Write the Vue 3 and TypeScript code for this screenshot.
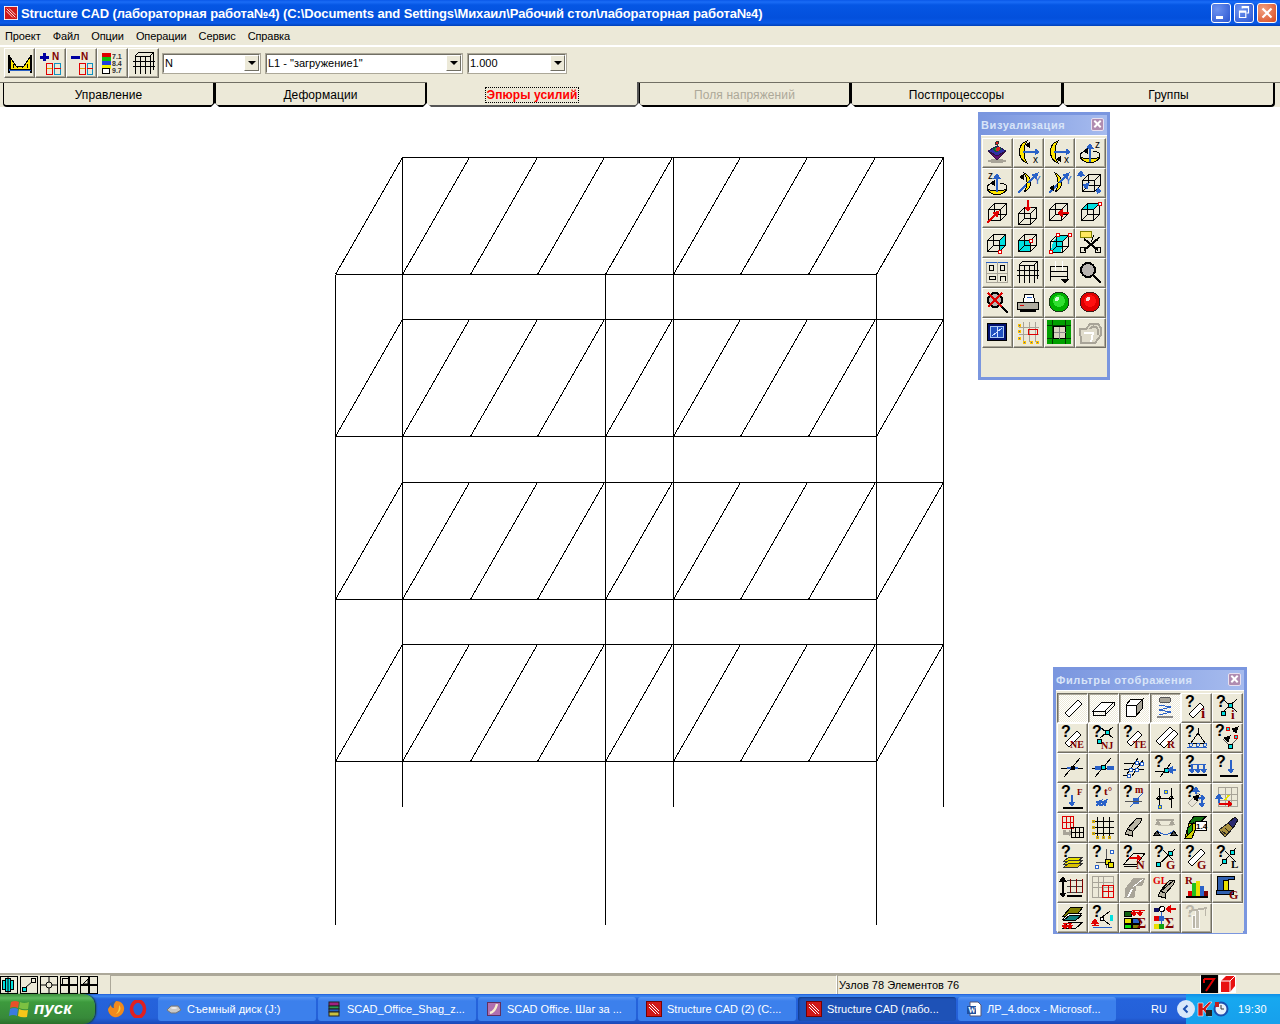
<script setup lang="ts">
const L = (a: number, b: number, c: number, d: number, s = '#000', w = 1) =>
  `<line x1="${a}" y1="${b}" x2="${c}" y2="${d}" stroke="${s}" stroke-width="${w}"/>`
const R = (x: number, y: number, w: number, h: number, f = 'none', s = '#000') =>
  `<rect x="${x}" y="${y}" width="${w}" height="${h}" fill="${f}" stroke="${s}"/>`
const D = (d: string, f = 'none', s = '#000', w = 1) =>
  `<path d="${d}" fill="${f}" stroke="${s}" stroke-width="${w}"/>`
const C = (x: number, y: number, r: number, f = 'none', s = '#000') =>
  `<circle cx="${x}" cy="${y}" r="${r}" fill="${f}" stroke="${s}"/>`
const T = (x: number, y: number, str: string, c = '#000', size = 9, fam = 'Liberation Serif', weight = 'bold') =>
  `<text x="${x}" y="${y}" fill="${c}" font-size="${size}" font-weight="${weight}" font-family="${fam}, serif">${str}</text>`
const axis = (x: number, y: number, str: string, c = '#000') => T(x, y, str, c, 10, 'Liberation Sans', 'normal')

const Q = (x = 1, y = 11) => T(x, y + 1, '?', '#000', 16, 'Liberation Sans')
const RED = '#e00000'
const DKRED = '#800000'
const BLUE = '#2a62c8'
const CY = '#00e0e0'

const arrR = (x: number, y: number, n: number, c = BLUE) =>
  L(x, y, x + n, y, c, 2) + D(`M${x + n} ${y - 3}L${x + n + 4} ${y}L${x + n} ${y + 3}Z`, c, c)
const arrL = (x: number, y: number, n: number, c = BLUE) =>
  L(x, y, x - n, y, c, 2) + D(`M${x - n} ${y - 3}L${x - n - 4} ${y}L${x - n} ${y + 3}Z`, c, c)
const arrD = (x: number, y: number, n: number, c = BLUE) =>
  L(x, y, x, y + n, c, 2) + D(`M${x - 3} ${y + n}L${x} ${y + n + 4}L${x + 3} ${y + n}Z`, c, c)
const arrU = (x: number, y: number, n: number, c = BLUE) =>
  L(x, y, x, y - n, c, 2) + D(`M${x - 3} ${y - n}L${x} ${y - n - 4}L${x + 3} ${y - n}Z`, c, c)
const arrNE = (x: number, y: number, n: number, c = BLUE) =>
  L(x, y, x + n, y - n, c, 2) + D(`M${x + n - 3} ${y - n - 1}L${x + n + 3} ${y - n - 3}L${x + n + 1} ${y - n + 3}Z`, c, c)
const tip = (x: number, y: number) => D(`M${x} ${y - 2}L${x - 3} ${y}L${x} ${y + 2}Z`, '#000')

const crescentV = (x = 0) =>
  D(`M${x + 9} 1C${x - 1} 4 ${x - 1} 19 ${x + 9} 23C${x + 5} 17 ${x + 5} 7 ${x + 9} 1Z`, '#ffe600')
const ringH = (y = 0) =>
  D(`M2 ${y + 9}C2 ${y + 19} 22 ${y + 19} 22 ${y + 9}C22 ${y + 14} 2 ${y + 14} 2 ${y + 9}Z`, '#ffe600') +
  D(`M2 ${y + 9}C3 ${y + 6} 8 ${y + 5} 9 ${y + 5}M22 ${y + 9}C21 ${y + 6} 17 ${y + 5} 15 ${y + 5}`)
const crescentY = () => D('M8 3C17 7 17 17 8 22C12 16 12 9 8 3Z', '#ffe600')

const cube = (x = 3, y = 7, face = '') =>
  (face ? face : '') +
  R(x + 0.5, y + 5.5, 12, 11) +
  R(x + 6.5, y - 0.5, 12, 11) +
  L(x + 0.5, y + 5.5, x + 6.5, y - 0.5) +
  L(x + 12.5, y + 5.5, x + 18.5, y - 0.5) +
  L(x + 0.5, y + 16.5, x + 6.5, y + 10.5) +
  L(x + 12.5, y + 16.5, x + 18.5, y + 10.5)
const rod = (x = 7, y = 21, n = 14, f = '#fff', s = '#000') =>
  D(`M${x} ${y - 4}L${x + n} ${y - 4 - n}L${x + n + 4} ${y - n}L${x + 4} ${y}Z`, f, s)
const frame = (c = '#000') =>
  L(3.5, 5, 3.5, 23, c) + L(8.5, 5, 8.5, 23, c) + L(13.5, 5, 13.5, 23, c) + L(18.5, 5, 18.5, 23, c) + L(21.5, 2, 21.5, 19, c) +
  L(3, 5.5, 19, 5.5, c) + L(7, 1.5, 22, 1.5, c) + L(3, 5, 7, 1, c) + L(18, 5, 22, 1, c) + L(1, 10.5, 23, 10.5, c) + L(1, 15.5, 23, 15.5, c)
const iBeam = (x = 5, y = 4) =>
  D(`M${x} ${y + 11}L${x + 10} ${y}L${x + 15} ${y + 1}L${x + 13} ${y + 5}L${x + 5} ${y + 14}L${x + 5} ${y + 18}L${x - 2} ${y + 16}L${x} ${y + 12}Z`, '#b8b4a4') +
  L(x, y + 11, x + 5, y + 13)

const vizIcons: string[] = [
  // row 1
  L(12, 1, 12, 7, '#333') + C(12, 3, 1.5, '#e02020', '#333') +
  `<ellipse cx="12" cy="21" rx="9" ry="2" fill="#a8a498"/>` +
  D('M3 11L12 6L21 11L12 20Z', '#3030a8', '#202060') + D('M3 11L12 16L21 11L12 20Z', '#601070', '#301040') +
  D('M8 9L12 7L16 9L12 12Z', '#10a040', '#106030') + C(13, 9, 1.5, '#e02020', '#e02020'),
  crescentV(2) + arrR(7, 12, 12) + tip(13, 5) + axis(17, 23, 'x'),
  crescentV(2) + arrR(7, 12, 12) + tip(13, 19) + axis(17, 23, 'x'),
  ringH(6) + arrU(12, 22, 14) + axis(17, 8, 'z') + tip(9, 11),
  // row 2
  ringH(8) + arrU(12, 22, 14) + axis(3, 9, 'z') + tip(9, 13),
  L(2, 23, 10, 15, BLUE, 2) + crescentY() + arrNE(12, 13, 7) + axis(18, 14, 'Y', BLUE) + tip(7, 7),
  L(2, 23, 10, 15, BLUE, 2) + crescentY() + arrNE(12, 13, 7) + axis(18, 14, 'Y', BLUE) + tip(6, 18),
  cube(4, 5) + arrU(3, 7, 2) + arrNE(6, 18, 2) + arrR(18, 21, 1),
  // row 3
  cube(3, 4) + arrNE(2, 23, 9, RED),
  cube(2, 8) + arrD(12, 0, 7, RED),
  cube(2, 4) + arrL(22, 13, 7, RED),
  cube(3, 4, D('M3.5 9.5L9.5 3.5L21.5 3.5L15.5 9.5Z', CY, 'none')) + R(20, 2, 3, 3, '#fff', RED),
  // row 4
  cube(2, 5, D('M14.5 10.5L20.5 4.5L20.5 15.5L14.5 21.5Z', CY, 'none')) + R(13, 20, 3, 3, '#fff', RED),
  cube(2, 5, R(2.5, 10.5, 12, 11, CY, '#000')) + R(13, 9, 3, 3, '#fff', RED),
  cube(3, 6, D('M6 12L12 5L22 5L16 12Z M6 12L3.5 22L14 22L16 12Z', CY, 'none')) + R(9, 3, 3, 3, '#fff', RED) + R(21, 3, 3, 3, '#fff', RED) + R(2, 20, 3, 3, '#fff', RED),
  R(2.5, 1.5, 11, 6, '#ffe860', '#808000') + L(6, 9, 20, 20, '#000', 2) + L(20, 9, 6, 20, '#000', 2) + C(5, 20, 3) + C(20, 20, 3) + L(16, 5, 13, 12) + L(22, 7, 16, 11),
  // row 5
  R(1.5, 2.5, 21, 20, 'none', '#a8a498') + L(1, 2.5, 23, 2.5, BLUE) + L(12, 2, 12, 22, '#a8a498') + L(1, 13, 23, 13, '#a8a498') + R(4.5, 5.5, 4, 5) + R(15.5, 5.5, 4, 5) + R(4.5, 16.5, 6, 3) + D('M15.5 21V16H20.5V21'),
  frame(),
  L(3, 6.5, 21, 6.5) + L(3, 11.5, 21, 11.5) + L(3, 16.5, 21, 16.5) + L(3.5, 6, 3.5, 21) + L(20.5, 6, 20.5, 21) + L(8.5, 1, 8.5, 11, '#fff') + L(15.5, 1, 15.5, 11, '#fff') + D('M14 19H22L18 23Z', '#000'),
  `<circle cx="10" cy="10" r="7" fill="#b8b4b0" stroke="#000" stroke-width="2"/>` + L(15, 15, 23, 23, '#000', 2),
  // row 6
  `<circle cx="10" cy="10" r="7" fill="#b8b4b0" stroke="#000" stroke-width="2"/>` + L(15, 15, 23, 23, '#000', 2) + L(3, 3, 17, 17, RED, 2) + L(17, 3, 3, 17, RED, 2),
  D('M7 12L9 4H17L19 12Z', '#fff') + R(1.5, 12.5, 21, 7, '#b0aca0') + L(4, 15, 8, 15, RED) + L(4, 21, 20, 21, '#000', 2) + L(11, 7, 16, 7, BLUE),
  `<circle cx="12" cy="12" r="10" fill="#00b000" stroke="#1a3a1a"/><circle cx="12" cy="11" r="6" fill="#30e030"/><circle cx="10" cy="9" r="2" fill="#d8ffd8"/>`,
  `<circle cx="12" cy="12" r="10" fill="#e00000" stroke="#401a1a"/><circle cx="12" cy="11" r="6" fill="#ff1010"/><circle cx="10" cy="9" r="2" fill="#ffd8d8"/>`,
  // row 7
  R(2.5, 3.5, 19, 17, '#001070', '#000') + R(5.5, 6.5, 13, 11, '#2050c0', '#a8c8f0') + L(7, 16, 17, 8, '#d0e0ff') + L(12, 7, 12, 17, '#d0e0ff'),
  L(7.5, 2, 7.5, 22, '#a8a498') + L(13.5, 2, 13.5, 22, '#a8a498') + L(19.5, 2, 19.5, 22, '#a8a498') + L(3, 7.5, 23, 7.5, '#a8a498') + L(3, 14.5, 23, 14.5, '#a8a498') +
  R(12.5, 9.5, 9, 5, 'none', RED) + R(2, 4, 2, 2, BLUE, '#ffc000') + R(2, 10, 2, 2, BLUE, '#ffc000') + R(2, 17, 2, 2, BLUE, '#ffc000') + R(7, 21, 2, 2, BLUE, '#ffc000') + R(14, 21, 2, 2, BLUE, '#ffc000') + R(20, 21, 2, 2, BLUE, '#ffc000'),
  `<path d="M0 0H24V24H0Z" fill="#00a000"/>` + L(0, 5.5, 24, 5.5, '#004000') + L(0, 18.5, 24, 18.5, '#004000') + L(5.5, 0, 5.5, 24, '#004000') + L(18.5, 0, 18.5, 24, '#004000') + R(6.5, 6.5, 12, 12, '#d8d4c0', '#000') + L(12.5, 6.5, 12.5, 18.5, '#888') + L(6.5, 12.5, 18.5, 12.5, '#888'),
  D('M2 9H8L12 4H20L23 8V15L17 23H3Z', '#e0dccc', '#a8a498', 2) + D('M6 13H15L13 22', 'none', '#fff', 2) + D('M12 9C14 5 20 6 20 11V15', 'none', '#a8a498', 2),
]

const filterIcons: string[] = [
  // row 1
  rod(5, 22, 13),
  D('M2 16L11 7H23L14 16Z', '#fff') + D('M2 16V20H14V16M14 20L23 11V7', 'none'),
  D('M4 10L9 4H21L20 14L14 21H4Z', '#fff') + D('M4 10H15L14 21M15 10L21 4', 'none') + D('M15 10L21 4L20 14L14 21Z', '#a8a498'),
  `<ellipse cx="12" cy="5" rx="6" ry="3" fill="#a8a498" stroke="#555"/>` + D('M6 10L18 12L6 15L18 17L6 20', 'none', BLUE) + L(4, 22, 20, 22, '#888', 2),
  Q(1, 11) + rod(5, 23, 11) + T(17, 23, 'i', DKRED, 15),
  Q(1, 11) + L(8, 4, 22, 17) + L(22, 4, 8, 17) + R(13, 8, 4, 4, CY) + R(6, 16, 4, 4, CY) + T(16, 24, 'i', DKRED, 13),
  // row 2
  Q(1, 11) + rod(5, 22, 12) + T(10, 23, 'NE', DKRED, 10),
  Q(1, 11) + L(9, 2, 22, 13) + L(22, 2, 9, 13) + R(14, 5, 4, 4, CY) + R(6, 14, 4, 4, CY) + T(10, 24, 'NJ', DKRED, 10),
  Q(1, 11) + rod(5, 21, 11) + T(11, 23, 'TE', DKRED, 10),
  rod(3, 20, 14) + rod(7, 23, 14) + T(14, 23, 'R', DKRED, 11),
  Q(1, 11) + L(14, 3, 14, 8) + L(7, 18, 14, 8) + L(21, 18, 14, 8) + L(4, 18, 23, 18) + C(7, 20, 1.5, 'none', BLUE) + C(14, 20, 1.5, 'none', BLUE) + C(21, 20, 1.5, 'none', BLUE) + L(3, 22, 23, 22, BLUE),
  Q(0, 10) + R(11, 2, 3, 3, CY, RED) + R(19, 10, 3, 3, CY, RED) + arrNE(18, 7, 2, '#000') + arrNE(14, 12, -2, '#000') + L(8, 14, 14, 20, '#555') + L(22, 14, 16, 20, '#555') + R(13, 19, 4, 4, CY, '#000'),
  // row 3
  L(1, 13, 23, 13) + L(4, 22, 20, 3) + L(7, 13, 11, 13, BLUE, 2) + L(14, 13, 18, 13, BLUE, 2) + R(11, 11, 3, 3, '#000'),
  L(1, 13, 23, 13) + L(4, 22, 20, 3) + R(4, 11, 6, 3, BLUE, BLUE) + R(16, 11, 6, 3, BLUE, BLUE) + R(10.5, 10.5, 4, 4, CY),
  L(2, 8, 22, 8) + L(2, 14, 22, 14) + L(5, 19, 16, 3) + L(10, 21, 21, 5) + L(1, 20, 8, 20) + R(13, 6, 3, 3, '#fff', BLUE) + R(18, 7, 3, 3, '#fff', BLUE) + R(7, 13, 3, 3, '#fff', BLUE) + R(13, 13, 3, 3, '#fff', BLUE) + R(5, 19, 3, 3, '#fff', BLUE),
  Q(1, 11) + L(2, 16, 20, 16) + L(7, 22, 18, 8) + R(11, 13, 4, 4, CY) + arrL(23, 15, 4),
  Q(1, 11) + L(4, 20, 23, 20, '#000', 2) + L(7, 9, 22, 9, BLUE) + arrD(8, 10, 4) + arrD(14, 10, 4) + arrD(20, 10, 4),
  Q(1, 11) + L(5, 21, 23, 21, '#000', 2) + arrD(16, 5, 9),
  // row 4
  Q(1, 11) + L(3, 23, 23, 23, '#000', 2) + arrD(12, 10, 7) + T(17, 10, 'F', DKRED, 9),
  Q(1, 11) + arrNE(5, 21, 3) + arrNE(10, 21, 3) + L(14, 17, 16, 14, BLUE) + T(13, 10, 't°', DKRED, 11),
  Q(1, 11) + L(8, 22, 21, 8, BLUE) + R(11, 13, 5, 5, BLUE, BLUE) + T(13, 8, 'm', DKRED, 10) + L(3, 16, 20, 16, '#555'),
  L(6, 3, 6, 23) + L(18, 3, 18, 23) + L(3, 13, 21, 13) + C(6, 13, 1.5, 'none') + C(18, 13, 1.5, 'none') + R(5, 20, 3, 3, '#e8e000', BLUE) + R(11, 5, 3, 3, '#e8e000', BLUE),
  Q(1, 11) + rod(4, 22, 10, '#e8e4d8', '#a8a498') + arrU(12, 9, 3) + arrR(14, 13, 3) + arrD(18, 15, 3) + arrNE(10, 15, 2, '#000'),
  R(3.5, 2.5, 19, 19, 'none', '#a8a498') + L(10, 2, 10, 22, '#a8a498') + L(16, 2, 16, 22, '#a8a498') + L(3, 9, 23, 9, '#a8a498') + L(3, 15, 23, 15, '#a8a498') + arrU(4, 18, 5) + arrR(4, 19, 9, RED) + L(10, 15, 14, 10, '#e8e000', 2),
  // row 5
  R(2.5, 1.5, 11, 6, 'none', RED) + R(2.5, 7.5, 11, 6, 'none', RED) + L(6, 2, 6, 14, RED) + L(10, 2, 10, 14, RED) + D('M5 17H9V15L12 18L9 21V19H3V15H5Z', '#a8a498', '#a8a498') + R(11.5, 12.5, 12, 10) + L(15, 13, 15, 22) + L(19, 13, 19, 22) + L(12, 17, 23, 17),
  L(3, 6.5, 23, 6.5) + L(3, 12.5, 23, 12.5) + L(3, 18.5, 23, 18.5) + L(6.5, 2, 6.5, 23, '#000') + L(12.5, 2, 12.5, 23) + L(18.5, 2, 18.5, 23) + R(1, 5, 2, 2, BLUE, '#e0b000') + R(1, 11, 2, 2, BLUE, '#e0b000') + R(1, 17, 2, 2, BLUE, '#e0b000') + R(5, 21, 2, 2, BLUE, '#e0b000') + R(11, 21, 2, 2, BLUE, '#e0b000') + R(17, 21, 2, 2, BLUE, '#e0b000'),
  iBeam(5, 3),
  L(3, 5, 21, 5, '#a8a498', 2) + D('M5 6L3 9H7Z', '#a8a498', '#a8a498') + D('M19 6L17 9H21Z', '#a8a498', '#a8a498') + D('M4 15C9 21 16 21 21 15', 'none', BLUE) + D('M4 16L1 20H7Z', '#555') + D('M21 16L18 20H24Z', '#555') + L(5, 10, 20, 10, '#c8c4b4'),
  D('M5 8L10 1H23L15 8Z', '#107010', '#000') + D('M5 8H14L8 23H1Z', '#d0d000', '#000') + D('M4 13L9 8L8 16L3 21Z', '#10a010') + R(11.5, 6.5, 11, 9, '#fff') + T(12, 14, '1.4', '#000', 8, 'Liberation Sans'),
  D('M4 15L13 8L18 13L10 22Z', '#a89040', '#222') + D('M13 8L18 13L23 5L20 2Z', '#2a2a70', '#111') + L(7, 16, 12, 20, '#222') + L(10, 13, 15, 18, '#222'),
  // row 6
  Q(1, 11) + D('M4 16L9 12H23L18 16Z', '#e8e000', '#333') + D('M4 19L9 15H23L18 19Z', '#e8e000', '#333') + D('M4 22L9 18H23L18 22Z', '#d8c000', '#333'),
  Q(1, 11) + L(5, 17, 23, 17, '#555') + L(15, 4, 15, 23, '#555') + R(19, 5, 3, 3, '#fff', BLUE) + R(4, 20, 3, 3, '#fff', BLUE) + R(14, 14, 5, 5, '#e8e000') + R(17, 17, 5, 5, '#e8e000'),
  Q(1, 11) + D('M2 19L12 8H23L15 19Z', 'none') + L(2, 21, 15, 21) + arrR(7, 13, 8, RED) + T(14, 24, 'N', DKRED, 12),
  Q(1, 11) + L(3, 22, 22, 4) + L(10, 5, 20, 15) + R(15, 6, 4, 4, CY) + R(3, 17, 4, 4, CY) + T(13, 24, 'G', DKRED, 12),
  Q(1, 11) + rod(4, 21, 13) + T(13, 24, 'G', DKRED, 12),
  Q(1, 11) + L(5, 21, 21, 3) + L(10, 6, 21, 17) + R(15, 5, 4, 4, CY) + R(7, 14, 4, 4, CY) + T(16, 23, 'L', '#000', 11),
  // row 7
  L(3, 4, 3, 20, '#000', 2) + D('M0 6L3 2L6 6ZM0 18L3 22L6 18Z', '#000') + L(7, 5.5, 22, 5.5, '#444', 1) + L(7, 11.5, 22, 11.5, '#444') + L(7, 17.5, 22, 17.5, '#444') + L(10.5, 4, 10.5, 18, DKRED) + L(16.5, 4, 16.5, 18, DKRED) + L(22.5, 4, 22.5, 18, DKRED) + L(7, 21, 22, 21, '#000', 2),
  R(1.5, 1.5, 21, 21, 'none', '#a8a498') + L(7, 2, 7, 22, '#a8a498') + L(12, 2, 12, 22, '#a8a498') + L(2, 7, 22, 7, '#a8a498') + L(2, 12, 22, 12, '#a8a498') + R(11.5, 10.5, 11, 12, 'none', RED) + L(17, 10, 17, 23, RED) + L(12, 16, 22, 16, RED),
  D('M4 13L12 3H23L20 10L14 11L12 22H3Z', '#a8a498', '#a8a498') + L(10, 14, 6, 22, '#fff', 2) + L(11, 12, 21, 4, '#fff'),
  T(0, 9, 'GL', RED, 10) + iBeam(7, 5) + L(8, 16, 20, 6),
  T(1, 9, 'R', DKRED, 11) + R(4, 16, 3, 5, RED, RED) + R(8, 8, 3, 13, '#20c020', '#20c020') + R(12, 6, 3, 15, '#e8e000', '#e8e000') + R(16, 11, 3, 10, BLUE, BLUE) + R(20, 16, 3, 5, DKRED, DKRED) + L(2, 22, 24, 22, '#000', 2),
  D('M2 1H19V4H13V15H2Z', '#3060b0', '#000') + D('M8 5H13V15H8Z', '#e8e000', '#000') + R(1.5, 15.5, 17, 4, '#3060b0', '#000') + T(14, 24, 'G', DKRED, 12),
  // row 8
  D('M3 11L11 2H23L16 11Z', '#808000', '#000') + D('M3 14L9 8H22L16 14Z', '#fff', '#000') + D('M4 15L10 10H22L16 15Z', '#108080', '#000') + D('M3 23L9 17H23L16 23Z', '#e8e4d8') + L(3, 18, 12, 18, RED) + arrD(5, 18, 2, RED) + arrD(10, 18, 2, RED),
  Q(1, 11) + L(10, 13, 19, 6) + L(10, 13, 19, 20) + R(9, 12, 3, 3, '#fff') + arrU(4, 20, 2, RED) + L(2, 22, 21, 22, BLUE) + R(19, 10, 2, 5, CY, CY) + L(1, 20, 8, 20, RED),
  R(2.5, 6.5, 7, 5, '#106010') + R(2.5, 13.5, 7, 5, '#e8e000') + R(2.5, 19.5, 7, 4, '#10e010') + R(10.5, 13.5, 7, 5, BLUE) + R(10.5, 19.5, 7, 4, '#808000') + L(10, 5, 23, 5, RED) + arrD(12, 6, 1, RED) + arrD(18, 6, 1, RED) + T(15, 23, 'Σ', DKRED, 14),
  L(2, 13, 14, 13, BLUE) + L(8, 3, 8, 23, BLUE) + R(1, 3, 4, 3, '#101060', '#101060') + C(9, 4, 2.5, '#fff') + arrL(23, 4, 6, RED) + R(1, 11, 4, 4, RED, RED) + R(6, 11, 4, 4, BLUE, BLUE) + R(1, 19, 4, 4, '#e8e000', '#e8e000') + R(6, 19, 4, 4, '#10a010', '#10a010') + T(12, 23, 'Σ', DKRED, 14),
  `<g opacity=".75">` + T(1, 12, '?', '#a8a498', 16, 'Liberation Sans') + D('M8 23V10H11V23Z', '#a8a498', '#fff') + D('M11 23V5H15V23Z', '#b8b4a8', '#fff') + L(5, 6, 23, 3, '#a8a498', 2) + L(21, 4, 21, 11, '#a8a498') + `</g>`,
  '',
]

const vizButtons = vizIcons.map((svg) => ({ svg, pressed: false }))
const filterButtons = filterIcons.map((svg, i) => ({ svg, pressed: i < 4 }))

const toolIcons: string[] = [
  L(1, 4, 1, 22, '#000', 2) + L(23, 4, 23, 22, '#000', 2) + L(1, 19, 23, 19, BLUE, 2) + D('M2 6L8 15H16L22 6V18H2Z', '#ffe600') + L(5, 13, 5, 17) + L(9, 15, 9, 17) + L(14, 15, 14, 17) + L(19, 13, 19, 17),
  L(1, 6, 10, 6, '#0000a0', 3) + L(5.5, 2, 5.5, 10, '#0000a0', 3) + T(13, 9, 'N', DKRED, 10, 'Liberation Sans') + R(7.5, 12.5, 6, 11, 'none', RED) + L(8, 17, 13, 17, '#e0a000') + R(15.5, 12.5, 6, 11, 'none', '#1090c0') + L(15, 17, 22, 17, RED),
  L(1, 6, 10, 6, '#0000a0', 3) + T(11, 9, 'N', DKRED, 10, 'Liberation Sans') + R(9.5, 12.5, 6, 11, 'none', RED) + L(10, 17, 15, 17, '#e0a000') + R(17.5, 12.5, 5, 11, 'none', '#1090c0') + L(17, 17, 23, 17, RED),
  R(1, 2, 8, 4, RED, RED) + R(1, 6, 8, 4, '#10c010', '#10c010') + R(1, 10, 8, 4, '#2040e0', '#2040e0') + R(1, 14, 8, 3, '#f0f000', '#f0f000') + R(1.5, 17.5, 7, 5, '#fff', '#000') +
    T(11, 8, '7.1', '#333', 7, 'Liberation Sans') + T(11, 15, '8.4', '#333', 7, 'Liberation Sans') + T(11, 22, '9.7', '#333', 7, 'Liberation Sans'),
  frame(),
]

const tabs = [
  { label: 'Управление', kind: '' },
  { label: 'Деформации', kind: '' },
  { label: 'Эпюры усилий', kind: 'active' },
  { label: 'Поля напряжений', kind: 'disabled' },
  { label: 'Постпроцессоры', kind: '' },
  { label: 'Группы', kind: '' },
]

const menu = ['Проект', 'Файл', 'Опции', 'Операции', 'Сервис', 'Справка']
const selects = [
  { value: 'N', cls: 'sel-a' },
  { value: 'L1 - "загружение1"', cls: 'sel-b' },
  { value: '1.000', cls: 'sel-c' },
]

const statusIcons: string[] = [
  R(1.5, 3.5, 3, 9, CY) + R(4.5, 1.5, 5, 13, CY) + R(9.5, 3.5, 3, 9, CY) + L(7, 0, 7, 16),
  R(1.5, 10.5, 4, 4, CY) + R(10.5, 1.5, 4, 4, 'none') + L(5, 10, 11, 5, '#000'),
  L(0, 8, 16, 8) + L(8, 0, 8, 16) + C(8, 8, 3, '#ece9d8'),
  R(1.5, 1.5, 6, 6, 'none') + L(0, 8, 16, 8, '#000', 2) + L(8, 0, 8, 16, '#000', 2),
  D('M2 7L7 2V7Z', 'none') + L(0, 8, 16, 8, '#000', 2) + L(8, 0, 8, 16, '#000', 2),
]

const tasks = [
  { label: 'Съемный диск (J:)', icon: 'disk', active: false },
  { label: 'SCAD_Office_Shag_z...', icon: 'rar', active: false },
  { label: 'SCAD Office. Шаг за ...', icon: 'pdf', active: false },
  { label: 'Structure CAD (2) (C:...', icon: 'scad', active: false },
  { label: 'Structure CAD (лабо...', icon: 'scad', active: true },
  { label: 'ЛР_4.docx - Microsof...', icon: 'word', active: false },
]

const frontX = [335, 605, 876]
const backX = [402, 673, 943]
const slabs = [274, 436, 599, 761]
const hatchX = [335, 402, 470, 537, 605, 673, 740, 808, 876]
const structure: number[][] = [
  ...frontX.map((x) => [x, 274, x, 924]),
  ...backX.map((x) => [x, 157, x, 806]),
  ...slabs.flatMap((y) => [
    [335, y, 876, y],
    [402, y - 117, 943, y - 117],
    ...hatchX.map((x) => [x, y, x + 67, y - 117]),
  ]),
]
</script>

<template>
  <div class="screen">
    <header class="titlebar">
      <svg class="app-icon" viewBox="0 0 16 16">
        <rect x=".5" y=".5" width="15" height="15" fill="#d01818" stroke="#fff" />
        <path d="M3 3L13 13M3 6L10 13M6 3L13 10" stroke="#fff" fill="none" />
      </svg>
      <span class="title-text">Structure CAD (лабораторная работа№4) (C:\Documents and Settings\Михаил\Рабочий стол\лабораторная работа№4)</span>
      <div class="win-buttons">
        <span class="win-btn"><i class="min-glyph"></i></span>
        <span class="win-btn">
          <svg viewBox="0 0 20 20"><path d="M8 5V3H15V10H13M5 8H12V15H5Z M8 4H15M5 9H12" stroke="#fff" fill="none" stroke-width="1.3" /></svg>
        </span>
        <span class="win-btn close">
          <svg viewBox="0 0 20 20"><path d="M5 5L15 15M15 5L5 15" stroke="#fff" stroke-width="2.4" /></svg>
        </span>
      </div>
    </header>

    <nav class="menubar">
      <span v-for="m in menu" :key="m" class="menu-item">{{ m }}</span>
    </nav>

    <div class="toolbar">
      <button v-for="(svg, i) in toolIcons" :key="i" class="tool-btn">
        <svg viewBox="0 0 24 24" v-html="svg"></svg>
      </button>
      <div class="selects">
        <div v-for="s in selects" :key="s.value" class="select" :class="s.cls">
          <span class="select-value">{{ s.value }}</span>
          <span class="select-arrow"></span>
        </div>
      </div>
    </div>

    <div class="tabs">
      <div v-for="t in tabs" :key="t.label" class="tab" :class="t.kind">
        <span class="tab-label">{{ t.label }}</span>
      </div>
    </div>

    <main class="canvas">
      <svg class="model" width="1280" height="866" viewBox="0 107 1280 866">
        <line
          v-for="(s, i) in structure"
          :key="i"
          :x1="s[0] + 0.5"
          :y1="s[1] + 0.5"
          :x2="s[2] + 0.5"
          :y2="s[3] + 0.5"
          stroke="#000"
        />
      </svg>
    </main>

    <footer class="statusbar">
      <div class="status-tools">
        <span v-for="(svg, i) in statusIcons" :key="i" class="status-btn">
          <svg viewBox="0 0 16 16" v-html="svg"></svg>
        </span>
      </div>
      <div class="status-cell grow"></div>
      <div class="status-cell info">Узлов 78 Элементов 76</div>
      <div class="status-marks">
        <svg width="17" height="18" viewBox="0 0 17 18">
          <rect width="17" height="18" fill="#000" />
          <path d="M3 4H13L5 16M3 4V8" stroke="#e00000" stroke-width="2" fill="none" />
        </svg>
        <svg width="17" height="18" viewBox="0 0 17 18">
          <rect width="17" height="18" fill="#fff" />
          <path d="M2 6L7 1H16V11L11 17H2Z" fill="#e81010" />
          <path d="M2 6H11V17M11 6L16 1" stroke="#fff" fill="none" />
        </svg>
      </div>
    </footer>

    <div class="taskbar">
      <div class="start">
        <svg width="22" height="22" viewBox="0 0 22 22">
          <path d="M2 4Q6 2 10 4L9 10Q5 8 1 10Z" fill="#e8502a" />
          <path d="M11 4Q15 6 20 4L19 11Q15 12 10 10Z" fill="#7cc142" />
          <path d="M1 11Q5 9 9 11L8 18Q4 16 0 18Z" fill="#3b7be0" />
          <path d="M10 11Q14 13 19 12L18 19Q13 20 9 18Z" fill="#f6c61a" />
        </svg>
        <span class="start-text">пуск</span>
      </div>
      <div class="quick">
        <svg width="18" height="18" viewBox="0 0 18 18">
          <circle cx="9" cy="9" r="8" fill="#2a5fb0" />
          <path d="M9 1C15 1 18 6 17 10C16 15 11 18 7 17C3 16 1 12 1 9C2 7 3 6 4 5C4 7 5 8 7 8C6 6 7 3 9 1Z" fill="#f08a1c" />
          <path d="M12 5C15 8 13 13 9 14C12 11 12 8 12 5Z" fill="#f8d040" />
        </svg>
        <svg width="18" height="18" viewBox="0 0 18 18">
          <ellipse cx="9" cy="9" rx="6.5" ry="8" fill="none" stroke="#e02020" stroke-width="3.6" />
        </svg>
      </div>
      <div class="task-list">
        <div v-for="t in tasks" :key="t.label" class="task" :class="{ active: t.active }">
          <svg class="task-icon" viewBox="0 0 16 16">
            <template v-if="t.icon === 'disk'">
              <path d="M1 9L5 5H12L15 9L10 12H5Z" fill="#c8c8c8" stroke="#777" />
              <ellipse cx="8" cy="7" rx="3" ry="1" fill="#eee" />
            </template>
            <template v-else-if="t.icon === 'rar'">
              <rect x="3" y="1" width="10" height="4" fill="#a02080" stroke="#222" />
              <rect x="3" y="5" width="10" height="3" fill="#2aa050" stroke="#222" />
              <rect x="3" y="8" width="10" height="3" fill="#2060c0" stroke="#222" />
              <rect x="3" y="11" width="10" height="4" fill="#c8c040" stroke="#222" />
            </template>
            <template v-else-if="t.icon === 'pdf'">
              <rect x="1.5" y="1.5" width="13" height="13" fill="#b070b0" stroke="#603060" />
              <path d="M4 12C8 11 10 7 11 3" stroke="#f8f0d0" stroke-width="2.4" fill="none" />
            </template>
            <template v-else-if="t.icon === 'scad'">
              <rect x=".5" y=".5" width="15" height="15" fill="#d01818" stroke="#700" />
              <path d="M3 3L13 13M3 6L10 13M6 3L13 10" stroke="#fff" fill="none" />
            </template>
            <template v-else>
              <path d="M4 1H12L15 4V15H4Z" fill="#fff" stroke="#557" />
              <rect x="1" y="5" width="9" height="8" fill="#2050a0" />
              <text x="2" y="12" font-size="8" font-weight="bold" fill="#fff" font-family="Liberation Serif, serif">W</text>
            </template>
          </svg>
          <span class="task-label">{{ t.label }}</span>
        </div>
      </div>
      <span class="lang">RU</span>
      <div class="tray">
        <span class="tray-toggle">
          <svg width="10" height="10" viewBox="0 0 10 10"><path d="M6.5 1.5L3 5L6.5 8.5" stroke="#1a4fb0" stroke-width="2" fill="none" /></svg>
        </span>
        <svg width="16" height="16" viewBox="0 0 16 16">
          <path d="M1 2H6V7L12 1H15L9 8L15 15H11L6 9V15H1Z" fill="#d01818" stroke="#fff" stroke-width=".6" />
          <rect x="9" y="9" width="6" height="6" fill="#222" />
        </svg>
        <svg width="16" height="16" viewBox="0 0 16 16">
          <circle cx="8" cy="8" r="6.5" fill="#e8f0fa" stroke="#1a4fb0" stroke-width="2" />
          <path d="M8 4V8H11" stroke="#333" fill="none" />
          <rect x="2" y="1" width="4" height="5" fill="#c02020" />
        </svg>
        <span class="clock">19:30</span>
      </div>
    </div>

    <section class="palette viz">
      <div class="pal-title">
        <span>Визуализация</span>
        <span class="pal-close"></span>
      </div>
      <div class="pal-grid four">
        <button v-for="(b, i) in vizButtons" :key="i" class="pal-btn">
          <svg viewBox="0 0 24 24" v-html="b.svg"></svg>
        </button>
      </div>
      <div class="pal-rest"></div>
    </section>

    <section class="palette filters">
      <div class="pal-title">
        <span>Фильтры отображения</span>
        <span class="pal-close"></span>
      </div>
      <div class="pal-grid six">
        <button v-for="(b, i) in filterButtons" :key="i" class="pal-btn" :class="{ pressed: b.pressed, blank: !b.svg }">
          <svg viewBox="0 0 24 24" v-html="b.svg"></svg>
        </button>
      </div>
    </section>
  </div>
</template>

<style scoped>
.screen {
  position: relative;
  width: 1280px;
  height: 1024px;
  overflow: hidden;
  display: flex;
  flex-direction: column;
  background: #ece9d8;
  font-family: "Liberation Sans", Arial, sans-serif;
  font-size: 11px;
  color: #000;
}

.titlebar {
  height: 26px;
  flex: none;
  display: flex;
  align-items: center;
  padding: 0 3px 0 4px;
  background: linear-gradient(to bottom, #0a58e8 0, #1a6cf6 2px, #0556e4 5px, #0350dc 18px, #0a5ae8 23px, #0040b8 26px);
}
.app-icon {
  width: 14px;
  height: 14px;
  margin-right: 3px;
}
.title-text {
  flex: 1;
  color: #fff;
  font-size: 13px;
  font-weight: bold;
  white-space: nowrap;
  letter-spacing: -0.12px;
}
.win-buttons {
  display: flex;
  gap: 3px;
}
.win-btn {
  position: relative;
  width: 20px;
  height: 20px;
  box-sizing: border-box;
  border: 1px solid #fff;
  border-radius: 3px;
  background: radial-gradient(circle at 30% 30%, #6e93f0, #2a55d0);
}
.win-btn svg {
  display: block;
  width: 18px;
  height: 18px;
}
.win-btn.close {
  background: radial-gradient(circle at 30% 30%, #f0a080, #d84a20);
}
.min-glyph {
  position: absolute;
  left: 4px;
  bottom: 3px;
  width: 7px;
  height: 3px;
  background: #fff;
}

.menubar {
  height: 19px;
  flex: none;
  display: flex;
  align-items: center;
  gap: 12px;
  padding-left: 5px;
  border-bottom: 1px solid #fff;
}
.menu-item {
  white-space: nowrap;
  letter-spacing: -0.1px;
}

.toolbar {
  height: 36px;
  flex: none;
  box-sizing: border-box;
  display: flex;
  align-items: center;
  padding: 0 0 3px 4px;
  border-top: 1px solid #fff;
}
.tool-btn,
.pal-btn {
  display: flex;
  align-items: center;
  justify-content: center;
  box-sizing: border-box;
  margin: 0;
  background: #ece9d8;
  border: 1px solid;
  border-color: #fff #716f64 #716f64 #fff;
  box-shadow: inset -1px -1px 0 #aca899;
}
.tool-btn {
  width: 31px;
  height: 30px;
  padding: 0;
}
.pal-btn {
  padding: 0 2px 2px 0;
}
.tool-btn svg,
.pal-btn svg {
  flex: none;
  width: 24px;
  height: 24px;
  overflow: visible;
  shape-rendering: crispEdges;
}
.selects {
  display: flex;
  align-items: center;
  margin-left: 3px;
  gap: 4px;
}
.select {
  box-sizing: border-box;
  height: 21px;
  display: flex;
  align-items: center;
  justify-content: space-between;
  background: #fff;
  border: 2px solid;
  border-color: #716f64 #fff #fff #716f64;
  outline: 1px solid #aca899;
  outline-offset: -1px;
}
.sel-a {
  width: 99px;
}
.sel-b {
  width: 198px;
}
.sel-c {
  width: 100px;
}
.select-value {
  padding-left: 1px;
  font-size: 11px;
}
.select-arrow {
  position: relative;
  width: 15px;
  height: 16px;
  box-sizing: border-box;
  background: #ece9d8;
  border: 1px solid;
  border-color: #fff #716f64 #716f64 #fff;
}
.select-arrow::after {
  content: "";
  position: absolute;
  left: 3px;
  top: 5px;
  border: 4px solid transparent;
  border-top: 4px solid #000;
  border-bottom: 0;
}

.tabs {
  height: 25px;
  flex: none;
  display: flex;
  align-items: flex-start;
  padding-left: 3px;
  border-top: 1px solid #716f64;
  box-sizing: border-box;
}
.tab {
  position: relative;
  width: 212px;
  height: 24px;
  box-sizing: border-box;
  display: flex;
  align-items: center;
  justify-content: center;
  padding-top: 2px;
  border: 0 solid #000;
  border-left-width: 1px;
  border-right-width: 2px;
  border-bottom-width: 2px;
  border-radius: 0 0 4px 4px;
  font-size: 12px;
  letter-spacing: 0.1px;
}
.tab::after {
  content: "";
  position: absolute;
  right: -6px;
  bottom: -2px;
  border-left: 4px solid transparent;
  border-right: 4px solid transparent;
  border-bottom: 4px solid #fff;
  z-index: 1;
}
.tab:last-child::after {
  display: none;
}
.tab.active {
  margin-top: -1px;
  height: 25px;
  background: #ece9d8;
  border-left-width: 0;
  border-right-color: #555;
  border-bottom-color: #555;
  color: #ff0000;
  font-weight: bold;
}
.tab.active .tab-label {
  border: 1px dotted #000;
  padding: 0 1px;
}
.tab.disabled {
  color: #aca899;
}

.canvas {
  position: relative;
  flex: 1;
  background: #fff;
}
.model {
  position: absolute;
  left: 0;
  top: 0;
  shape-rendering: crispEdges;
}

.statusbar {
  height: 21px;
  flex: none;
  box-sizing: border-box;
  display: flex;
  align-items: stretch;
  border-top: 2px solid #aca899;
}
.status-tools {
  display: flex;
  gap: 2px;
  width: 110px;
  flex: none;
  box-sizing: border-box;
  padding-top: 1px;
}
.status-btn {
  width: 18px;
  height: 18px;
  box-sizing: border-box;
  border: 1px solid #000;
  background: #ece9d8;
}
.status-btn svg {
  display: block;
  width: 16px;
  height: 16px;
}
.status-cell {
  box-sizing: border-box;
  border-left: 1px solid #aca899;
  border-top: 1px solid #aca899;
  border-right: 1px solid #fff;
  display: flex;
  align-items: center;
}
.grow {
  width: 727px;
  flex: none;
}
.info {
  width: 364px;
  flex: none;
  padding-left: 1px;
  font-size: 11px;
}
.status-marks {
  display: flex;
  gap: 1px;
}

.taskbar {
  height: 30px;
  flex: none;
  display: flex;
  align-items: center;
  background: linear-gradient(to bottom, #1f5cd8 0, #3f8af0 2px, #2563dc 5px, #2460d8 24px, #1a48b8 30px);
}
.start {
  width: 95px;
  height: 30px;
  flex: none;
  box-sizing: border-box;
  display: flex;
  align-items: center;
  gap: 3px;
  padding-left: 9px;
  border-radius: 0 12px 12px 0;
  background: linear-gradient(to bottom, #3c8f3c 0, #5cb85c 4px, #3d9a3d 8px, #37893a 24px, #2a6e2a 30px);
  box-shadow: 1px 0 2px #123a12;
}
.start-text {
  color: #fff;
  font-size: 17px;
  font-weight: bold;
  font-style: italic;
}
.quick {
  width: 63px;
  flex: none;
  box-sizing: border-box;
  display: flex;
  gap: 4px;
  padding-left: 12px;
}
.task-list {
  display: flex;
  gap: 2px;
}
.task {
  width: 158px;
  height: 24px;
  box-sizing: border-box;
  display: flex;
  align-items: center;
  gap: 5px;
  padding-left: 8px;
  border-radius: 3px;
  background: linear-gradient(to bottom, #5a96f4, #3c80ec 4px, #3c80ec);
  color: #fff;
  font-size: 11px;
  white-space: nowrap;
}
.task.active {
  background: #1e52b7;
  box-shadow: inset 1px 1px 2px #123a88;
}
.task-icon {
  width: 16px;
  height: 16px;
  flex: none;
}
.lang {
  width: 70px;
  flex: none;
  padding-left: 35px;
  box-sizing: border-box;
  color: #fff;
  font-size: 11px;
}
.tray {
  flex: 1;
  height: 30px;
  display: flex;
  align-items: center;
  gap: 0;
  background: linear-gradient(to bottom, #0f8ee8, #17a8f0 4px, #17a0ec);
}
.tray-toggle {
  width: 18px;
  height: 18px;
  display: flex;
  align-items: center;
  justify-content: center;
  border-radius: 50%;
  background: #d8e8fa;
  margin: 0 2px 0 -9px;
}
.clock {
  margin-left: 9px;
  color: #fff;
  font-size: 11px;
  letter-spacing: 0.3px;
}

.palette {
  position: absolute;
  box-sizing: border-box;
  background: #ece9d8;
  border: 3px solid #7a96df;
  display: flex;
  flex-direction: column;
}
.viz {
  left: 978px;
  top: 112px;
  width: 132px;
  height: 268px;
}
.filters {
  left: 1053px;
  top: 667px;
  width: 194px;
  height: 267px;
}
.pal-title {
  height: 20px;
  flex: none;
  box-sizing: border-box;
  display: flex;
  align-items: center;
  justify-content: space-between;
  padding: 0 3px 1px 0;
  background: linear-gradient(to right, #7a96df, #a6bbee);
  color: #d8e4f8;
  font-size: 11px;
  font-weight: bold;
  letter-spacing: 0.6px;
}
.pal-close {
  position: relative;
  width: 13px;
  height: 13px;
  box-sizing: border-box;
  background: #b08cb0;
  border: 1px solid #e8e0f0;
  border-radius: 2px;
}
.pal-close::before,
.pal-close::after {
  content: "";
  position: absolute;
  left: 1px;
  top: 4px;
  width: 9px;
  height: 2px;
  background: #fff;
  transform: rotate(45deg);
}
.pal-close::after {
  transform: rotate(-45deg);
}
.pal-grid {
  display: grid;
  grid-auto-rows: 30px;
  padding: 2px 0 0 1px;
  border-top: 1px solid #fff;
}
.four {
  grid-template-columns: repeat(4, 31px);
}
.six {
  grid-template-columns: repeat(6, 31px);
}
.pal-btn {
  width: 31px;
  height: 30px;
}
.pal-btn.pressed {
  border-color: #716f64 #fff #fff #716f64;
  box-shadow: inset 1px 1px 0 #aca899;
  background: repeating-conic-gradient(#fff 0 25%, #ece9d8 0 50%) 0 0 / 2px 2px;
}
.pal-btn.blank {
  border-color: #fff #ece9d8 #ece9d8 #fff;
  box-shadow: none;
}
.pal-rest {
  flex: 1;
}
</style>

<style>
html,
body {
  margin: 0;
  background: #ece9d8;
}
</style>
